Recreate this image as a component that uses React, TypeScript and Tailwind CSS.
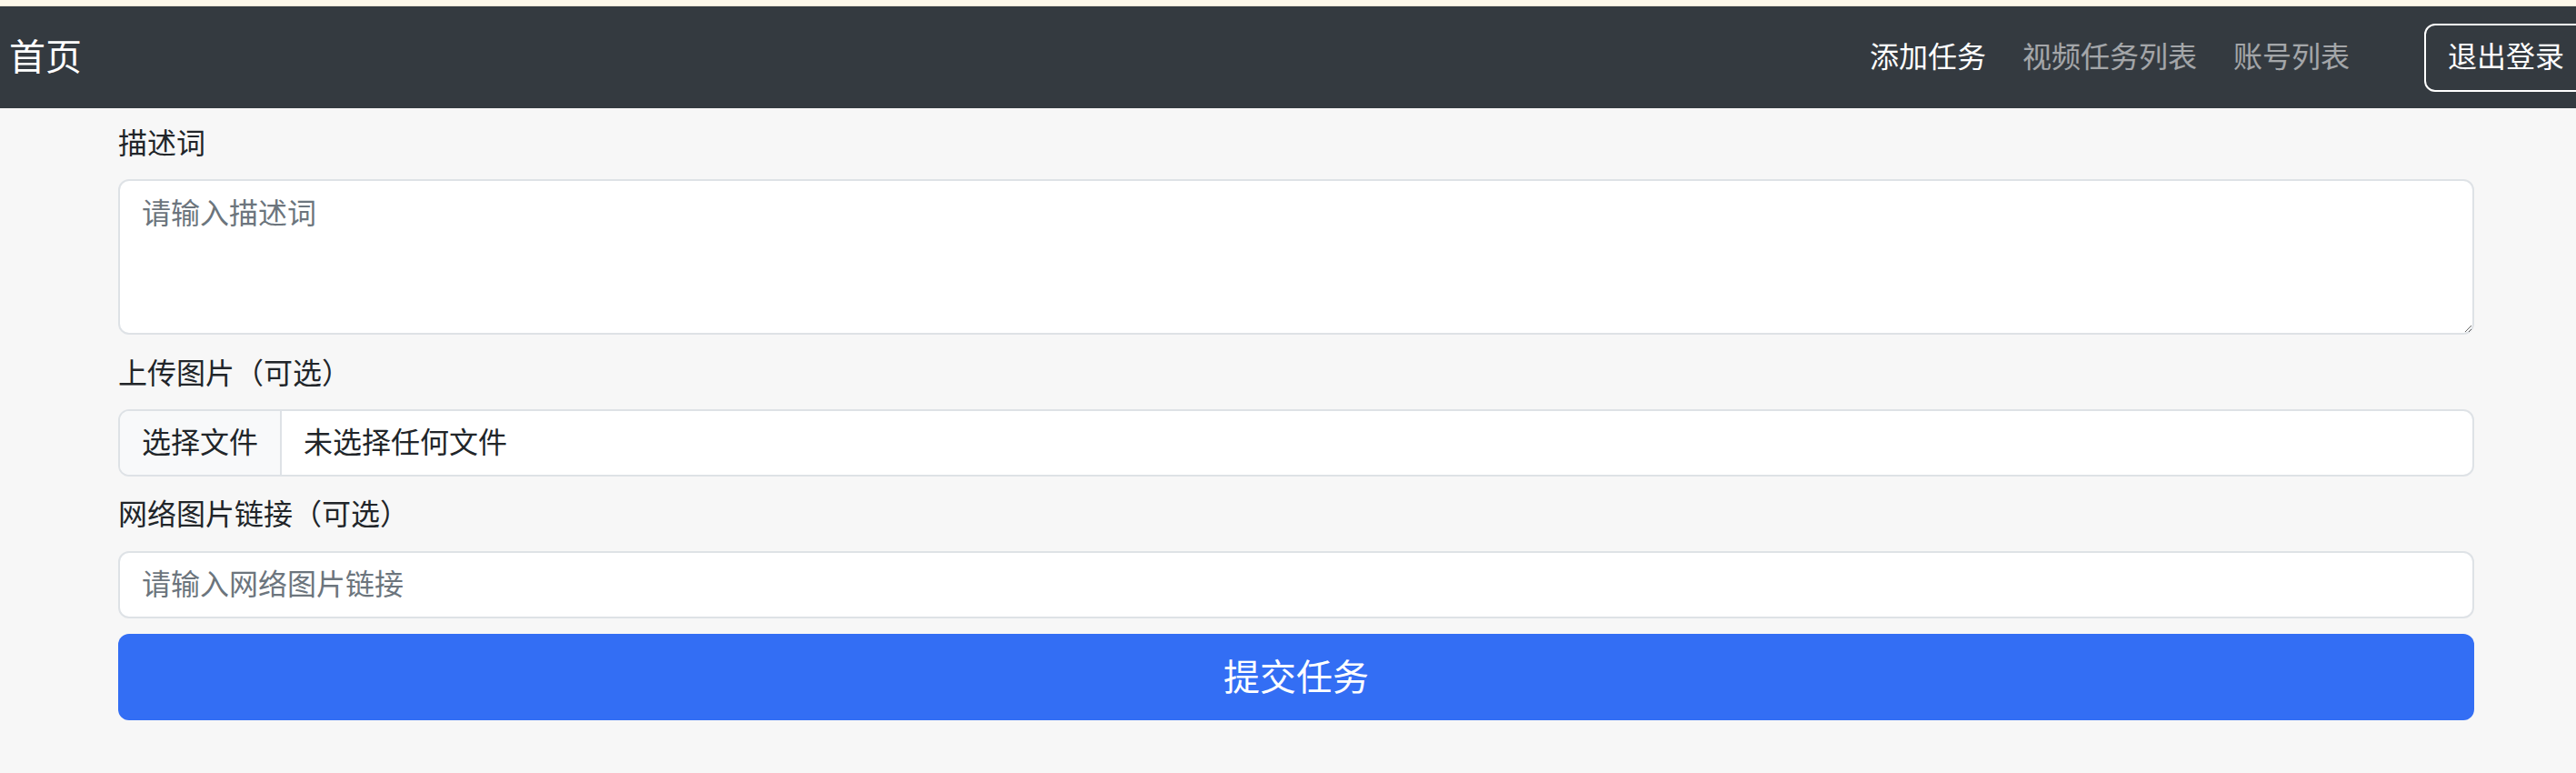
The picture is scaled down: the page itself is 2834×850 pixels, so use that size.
const font = "font-['Liberation_Sans','Noto_Sans_CJK_SC',sans-serif]";

function Navbar() {
  return (
    <nav className="flex h-[112px] items-center overflow-hidden bg-[#343a40]">
      <a className="pl-[10px] text-[40px] leading-[60px] text-white">首页</a>
      <div className="ml-auto flex items-center">
        <a className="px-[20px] text-[32px] leading-[48px] text-white">添加任务</a>
        <a className="px-[20px] text-[32px] leading-[48px] text-white/55">视频任务列表</a>
        <a className="px-[20px] text-[32px] leading-[48px] text-white/55">账号列表</a>
        <button className="ml-[62px] mr-[-13px] h-[75px] rounded-[12px] border-2 border-white px-[24px] text-[32px] leading-[48px] text-white">
          退出登录
        </button>
      </div>
    </nav>
  );
}

function Label({ children, className = "" }: { children: React.ReactNode; className?: string }) {
  return <label className={`block h-[48px] text-[32px] leading-[48px] text-[#212529] ${className}`}>{children}</label>;
}

export default function App() {
  return (
    <div className={`min-h-[850px] bg-[#f7f7f7] ${font}`}>
      <div className="h-[7px] border-b border-[#e9e4d6] bg-[#fcf7ea]" />
      <Navbar />
      <main className="ml-[130px] w-[2592px] pt-[15px]">
        <Label className="mb-[15px]">描述词</Label>
        <textarea
          rows={3}
          placeholder="请输入描述词"
          className="block h-[171px] w-full resize-y rounded-[12px] border-2 border-[#dee2e6] bg-white px-[24px] py-[12px] text-[32px] leading-[48px] text-[#212529] outline-none placeholder:text-[#6c757d]"
        />

        <Label className="mt-[19px] mb-[15px]">上传图片（可选）</Label>
        <div className="flex h-[74px] overflow-hidden rounded-[12px] border-2 border-[#dee2e6] bg-white text-[32px] leading-[48px] text-[#212529]">
          <span className="flex items-center border-r-2 border-[#dee2e6] bg-[#f8f9fa] px-[24px]">选择文件</span>
          <span className="flex items-center px-[24px]">未选择任何文件</span>
        </div>

        <Label className="mt-[18px] mb-[16px]">网络图片链接（可选）</Label>
        <input
          placeholder="请输入网络图片链接"
          className="block h-[74px] w-full rounded-[12px] border-2 border-[#dee2e6] bg-white px-[24px] text-[32px] leading-[48px] text-[#212529] outline-none placeholder:text-[#6c757d]"
        />

        <button className="mt-[17px] block h-[95px] w-full rounded-[12px] bg-[#336ef4] text-[40px] leading-[60px] text-white">
          提交任务
        </button>
      </main>
    </div>
  );
}
